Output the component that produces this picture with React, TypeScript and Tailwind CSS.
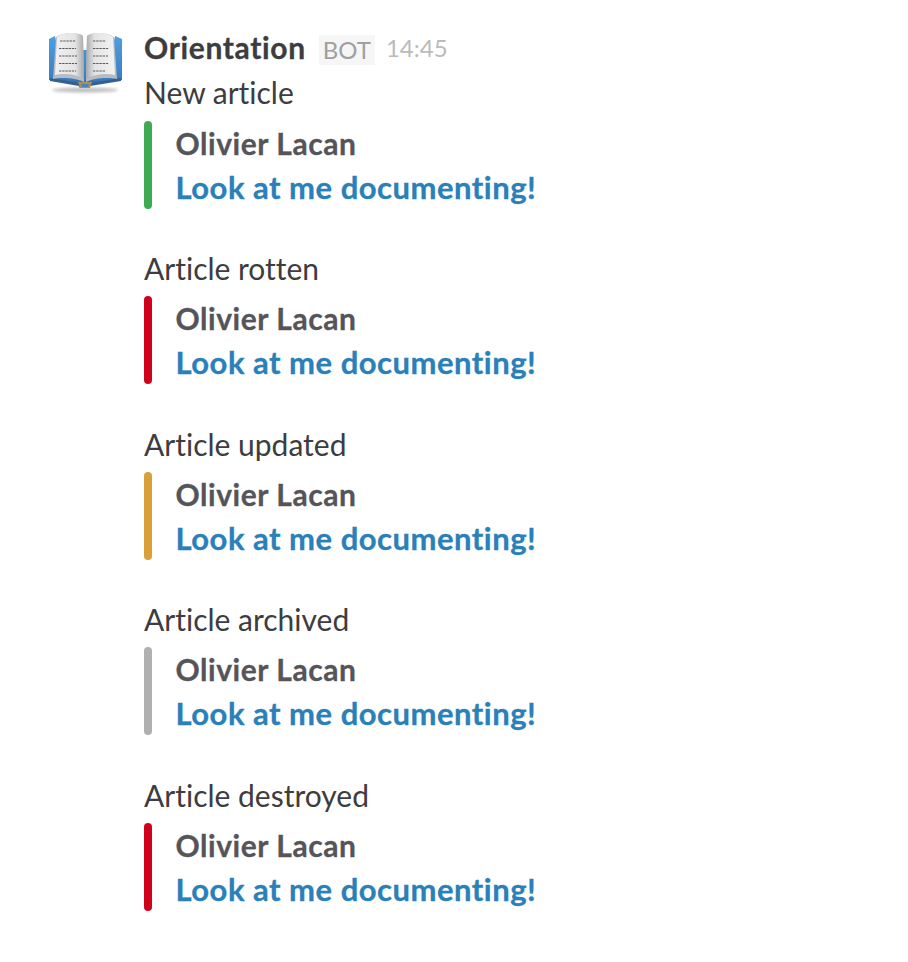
const ARTICLES = [
  { label: "New article", color: "bg-[#3eaa56]" },
  { label: "Article rotten", color: "bg-[#d0021b]" },
  { label: "Article updated", color: "bg-[#daa038]" },
  { label: "Article archived", color: "bg-[#b0b0b0]" },
  { label: "Article destroyed", color: "bg-[#d0021b]" },
];

function BookIcon() {
  return (
    <svg width="74" height="68" viewBox="8 8 74 68" aria-hidden>
      <defs>
        <linearGradient id="cover" x1="0" y1="0" x2="0" y2="1">
          <stop offset="0" stopColor="#4f9fe0" />
          <stop offset="0.8" stopColor="#3a7fc4" />
          <stop offset="1" stopColor="#2f5f94" />
        </linearGradient>
        <linearGradient id="pageL" x1="0" y1="0" x2="1" y2="0">
          <stop offset="0" stopColor="#f0f0f0" />
          <stop offset="0.7" stopColor="#e4e4e4" />
          <stop offset="1" stopColor="#a8a8a8" />
        </linearGradient>
        <linearGradient id="pageR" x1="0" y1="0" x2="1" y2="0">
          <stop offset="0" stopColor="#a8a8a8" />
          <stop offset="0.3" stopColor="#e4e4e4" />
          <stop offset="1" stopColor="#f2f2f2" />
        </linearGradient>
        <filter id="soft" x="-10%" y="-10%" width="120%" height="120%">
          <feGaussianBlur stdDeviation="0.5" />
        </filter>
        <filter id="shade" x="-20%" y="-200%" width="140%" height="500%">
          <feGaussianBlur stdDeviation="1.8" />
        </filter>
      </defs>
      <ellipse cx="45" cy="70" rx="33" ry="2.5" fill="#000" opacity="0.25" filter="url(#shade)" />
      <g filter="url(#soft)">
        <path d="M9 19 L15 16 L18 30 H72 L75 16 L82 19 V60 L50 65 L49 68 H40 L39 65 L9 60 Z" fill="url(#cover)" />
        <path d="M10 58 L40 63 H50 L81 58 V61 L50 66 L49 68 H40 L39 66 L10 61 Z" fill="#33608f" />
        <path d="M13 59 L16 17 C22 13 36 11 43 16 L44 62 C36 58 22 57 13 59 Z" fill="#b8bcc2" />
        <path d="M77 59 L74 17 C68 13 54 11 47 16 L46 62 C54 58 68 57 77 59 Z" fill="#b8bcc2" />
        <path d="M15 55 L17 17 C23 13 36 11 43 16 L44 59 C36 54 24 53 15 55 Z" fill="url(#pageL)" />
        <path d="M75 55 L73 17 C67 13 54 11 47 16 L46 59 C54 54 66 53 75 55 Z" fill="url(#pageR)" />
        <path d="M38 62 H52 L50 68 H40 Z" fill="#a98f57" />
        <path d="M41 64 H49 L48 67 H42 Z" fill="#4b83bd" />
      </g>
      <g stroke="#5a5a5a" strokeWidth="1" strokeDasharray="2.4 0.8" filter="url(#soft)">
        <path d="M20 21 H36" />
        <path d="M19 28.500 H36" />
        <path d="M19 36 H37" />
        <path d="M19 43.500 H37" />
        <path d="M19 51 H36" />
        <path d="M53 21 H66" />
        <path d="M53 28.500 H69" />
        <path d="M53 36 H68" />
        <path d="M53 43.500 H69" />
        <path d="M53 51 H65" />
      </g>
    </svg>
  );
}

export default function App() {
  return (
    <div className="flex min-h-[962px] w-full gap-6 bg-white pl-12 pt-[23.2px] font-['Lato',sans-serif] text-[30px] leading-[44px] text-[#3d3c40] [font-variant-ligatures:none]">
      <div className="mt-[5px] h-[68px] w-[72px] shrink-0">
        <BookIcon />
      </div>
      <div className="flex flex-col">
        <div className="flex h-[47.6px] items-center">
          <span className="font-bold tracking-[0.65px] [-webkit-text-stroke:0.3px_currentColor]">Orientation</span>
          <span className="ml-[13px] mt-[6px] bg-[#f6f6f6] px-1 text-2xl leading-[30px] text-[#a0a0a2]">BOT</span>
          <span className="ml-[11px] mt-[2px] text-2xl text-[#bbbbbb]">14:45</span>
        </div>
        <div className="flex flex-col gap-[37.5px]">
          {ARTICLES.map((article, i) => (
            <section key={article.label}>
              <p className={i === 0 ? "-mt-[1px]" : ""}>{article.label}</p>
              <div className={`flex gap-[23.5px] ${i === 0 ? "mt-[7px]" : "mt-[6px]"}`}>
                <div className={`h-[88px] w-2 rounded-full ${article.color}`} />
                <div className="font-bold [-webkit-text-stroke:0.3px_currentColor]">
                  <p className="tracking-[0.55px] text-[#555459]">Olivier Lacan</p>
                  <a className="block text-[31px] tracking-[0.5px] text-[#2a80b9]">Look at me documenting!</a>
                </div>
              </div>
            </section>
          ))}
        </div>
      </div>
    </div>
  );
}
